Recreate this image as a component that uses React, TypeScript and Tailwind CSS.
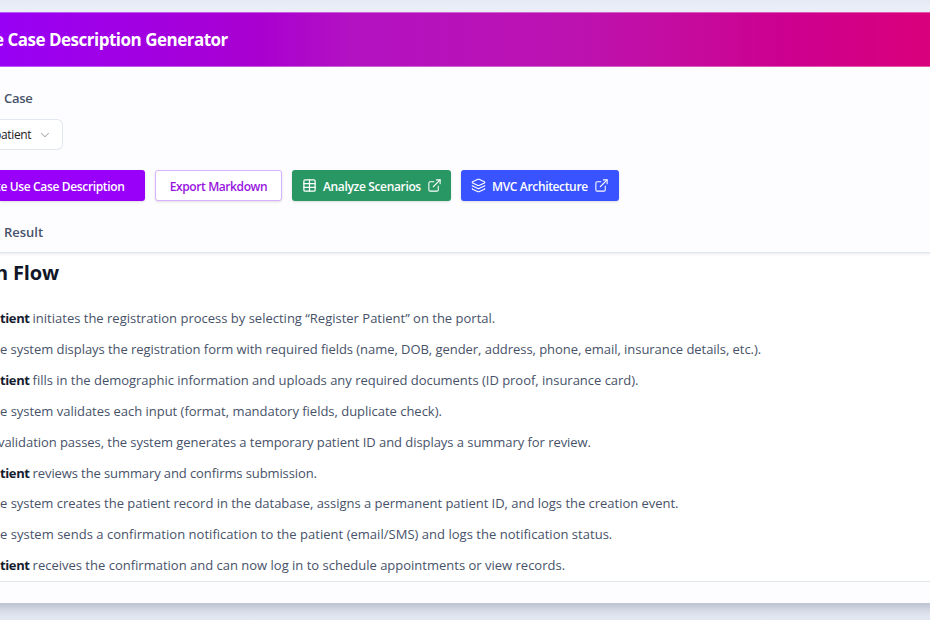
import React from 'react';
import { ChevronDown, ExternalLink, Layers, Table } from 'lucide-react';

type Step = {
  actor?: string;
  text: string;
  className: string;
};

const steps: Step[] = [
  { actor: 'tient', text: 'initiates the registration process by selecting “Register Patient” on the portal.', className: 'tracking-[0px]' },
  { text: 'e system displays the registration form with required fields (name, DOB, gender, address, phone, email, insurance details, etc.).', className: 'tracking-[-0.05px]' },
  { actor: 'tient', text: 'fills in the demographic information and uploads any required documents (ID proof, insurance card).', className: 'tracking-[-0.022px]' },
  { text: 'e system validates each input (format, mandatory fields, duplicate check).', className: 'tracking-[-0.02px]' },
  { text: 'validation passes, the system generates a temporary patient ID and displays a summary for review.', className: '-ml-0.5 tracking-[-0.055px]' },
  { actor: 'tient', text: 'reviews the summary and confirms submission.', className: 'tracking-[-0.1px]' },
  { text: 'e system creates the patient record in the database, assigns a permanent patient ID, and logs the creation event.', className: 'tracking-[-0.022px]' },
  { text: 'e system sends a confirmation notification to the patient (email/SMS) and logs the notification status.', className: 'tracking-[0.024px]' },
  { actor: 'tient', text: 'receives the confirmation and can now log in to schedule appointments or view records.', className: 'tracking-[0px]' },
];

const Header: React.FC = () => (
  <header className="h-[55px] shrink-0 flex items-center bg-[linear-gradient(90deg,#9800f5_0%,#a900d0_28%,#b312c2_38%,#bc12b0_62%,#c60a9c_75%,#cc0090_84%,#d9007b_100%)] border-y border-white/35">
    <h1 className="-ml-[6px] text-[17px] font-bold tracking-[-0.5px] text-white whitespace-nowrap">e Case Description Generator</h1>
  </header>
);

const Toolbar: React.FC = () => (
  <div className="mt-5 h-[31px] flex gap-2.5 text-[12px] font-semibold tracking-[-0.35px] whitespace-nowrap">
    <button className="w-[145px] shrink-0 rounded-r-[3px] bg-[#9800fa] text-white text-left shadow-sm pt-0.5">
      <span className="-ml-1">te Use Case Description</span>
    </button>
    <button className="w-[127px] shrink-0 rounded-[3px] border border-[#d9b2ff] bg-white text-[#9714e0] tracking-[-0.4px] shadow-sm pt-0.5">
      Export Markdown
    </button>
    <button className="w-[159px] shrink-0 rounded-[3px] bg-[#289764] text-white shadow-sm flex items-center pl-[10px]">
      <Table size={15} strokeWidth={2} className="shrink-0" />
      <span className="ml-1.5 pt-0.5 w-[98px] text-left">Analyze Scenarios</span>
      <ExternalLink size={15} strokeWidth={1.7} className="ml-[6px] shrink-0" />
    </button>
    <button className="w-[158px] shrink-0 rounded-[3px] bg-[#3853ff] text-white shadow-sm flex items-center pl-[9.5px]">
      <Layers size={15} strokeWidth={1.8} className="shrink-0" />
      <span className="ml-[6.5px] pt-0.5 w-[96px] text-left">MVC Architecture</span>
      <ExternalLink size={15} strokeWidth={1.7} className="ml-[6px] shrink-0" />
    </button>
  </div>
);

const StepRow: React.FC<{ step: Step }> = ({ step }) => (
  <li className="h-[30.85px] leading-[30.85px] whitespace-nowrap">
    <span className={step.className}>
      {step.actor && <strong className="font-bold tracking-[-0.38px] text-[#161d30]">{step.actor} </strong>}
      {step.text}
    </span>
  </li>
);

const ResultPanel: React.FC = () => (
  <section className="mt-[10px] h-[330px] bg-white border-y border-[#e2e6ef] shadow-[inset_0_4px_3px_-3px_rgba(30,41,80,0.1)]">
    <h2 className="-ml-[5px] mt-[5px] h-[30px] leading-[30px] text-[20px] font-bold tracking-[-0.15px] text-[#111729] whitespace-nowrap">n Flow</h2>
    <ol className="mt-[15.4px] text-[13px] text-[#475269]">
      {steps.map((step) => (
        <StepRow key={step.text} step={step} />
      ))}
    </ol>
  </section>
);

const App: React.FC = () => (
  <div className="h-[620px] w-[930px] overflow-hidden bg-[linear-gradient(180deg,#e5e9f4_0px,#edf1fa_12px,#e3e7f2_100%)] pt-3 font-['Open_Sans','Noto_Sans',sans-serif]">
    <main className="-mx-5 px-5 h-[591px] bg-[#fdfdff] shadow-[0_6px_10px_-1px_rgba(30,41,70,0.22)]">
      <Header />
      <div className="mt-[21px] h-5 pl-1 leading-5 text-[13px] font-semibold tracking-[-0.3px] text-[#475269]">Case</div>
      <div className="mt-[11px] h-[31px] w-[63px] flex items-center rounded-r-md border border-l-0 border-[#e2e6f0] bg-white text-[12px] text-[#222]">
        <span className="-ml-[6px] w-[37px] tracking-[-0.35px] whitespace-nowrap">patient</span>
        <ChevronDown size={14} strokeWidth={1.8} className="ml-[7px] shrink-0 text-[#a8a8b0]" />
      </div>
      <Toolbar />
      <div className="mt-[21px] h-5 -ml-[7.5px] leading-5 text-[13px] font-semibold text-[#475269]">d Result</div>
      <ResultPanel />
    </main>
  </div>
);

export default App;
